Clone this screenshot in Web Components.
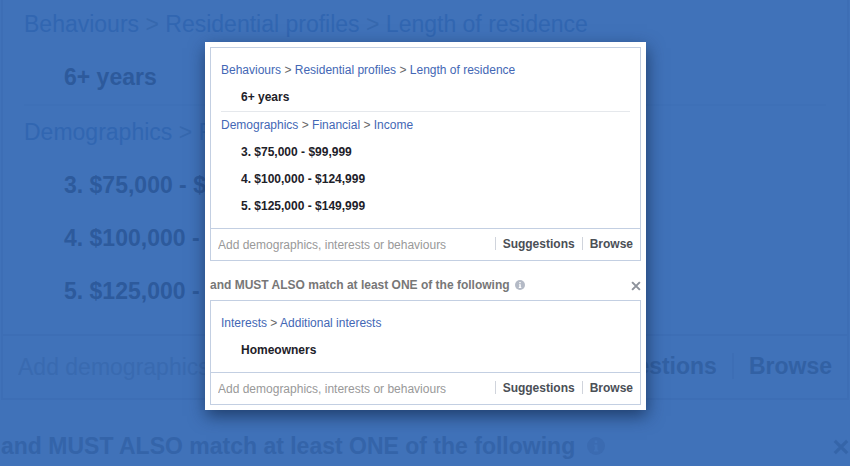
<!DOCTYPE html>
<html lang="en">
<head>
<meta charset="utf-8">
<title>Detailed targeting</title>
<style>
  html, body { margin: 0; }
  body { font-family: "Liberation Sans", Arial, sans-serif; }
</style>
</head>
<body>
<targeting-stage>
  <targeting-form slot="backdrop" class="backdrop" aria-hidden="true" inert></targeting-form>
  <targeting-form></targeting-form>
</targeting-stage>

<script>
/* Full-window stage: a faint enlarged form behind, a white card in front. */
class TargetingStage extends HTMLElement {
  constructor() {
    super();
    this.attachShadow({ mode: "open" }).innerHTML = `
      <style>
        :host {
          display: grid;
          grid-template-columns: 205fr 441fr 204fr;
          align-items: start;
          position: relative;
          box-sizing: border-box;
          min-height: 100vh;
          padding: 42px 0;
          overflow: hidden;
          background: #4072b9;
        }
        .back { position: absolute; inset: 0; overflow: hidden; }
        .card {
          grid-column: 2;
          position: relative;
          padding: 5px;
          background: #fff;
          box-shadow: 1px 6px 16px rgba(14, 34, 66, .65);
        }
        ::slotted(.backdrop) {
          --font: 23px;
          --row: 53px;
          --line: 2px;
          --top: 18px;
          --bottom: 16px;
          --inset: 21px;
          --indent: 40px;
          --foot: 62px;
          --foot-inset: 16px;
          --foot-gap: 16px;
          --bar: 26px;
          --head: 74px;
          --head-top: 18px;
          --info: 18px;
          --info-gap: 12px;
          --close: 16px;
          --border: #3d6eb5;
          --rule: #3e70b7;
          --link: #3166b1;
          --arrow: #3668ae;
          --item: #2d5a9c;
          --hint: #396ab0;
          --action: #3261a4;
          --title: #3464a9;
          --icon: #3b6bb1;
          --icon-mark: #4072b9;
          --cross: #3565a9;
          --second: none;
          margin: -22px 1px 0;
        }
      </style>
      <div class="back"><slot name="backdrop"></slot></div>
      <main class="card"><slot></slot></main>`;
  }
}

/* Both groups of conditions with the "must also match" heading between them. */
class TargetingForm extends HTMLElement {
  constructor() {
    super();
    this.attachShadow({ mode: "open" }).innerHTML = `
      <style>
        :host { display: block; font-size: var(--font, 12px); }
        .second { display: var(--second, block); }
      </style>
      <targeting-box>
        <targeting-group path="Behaviours|Residential profiles|Length of residence" items="6+ years"></targeting-group>
        <targeting-group path="Demographics|Financial|Income" items="3. $75,000 - $99,999|4. $100,000 - $124,999|5. $125,000 - $149,999"></targeting-group>
      </targeting-box>
      <match-heading>and MUST ALSO match at least ONE of the following</match-heading>
      <targeting-box class="second">
        <targeting-group path="Interests|Additional interests" items="Homeowners"></targeting-group>
      </targeting-box>`;
  }
}

/* A breadcrumb of categories followed by the values chosen in it. */
class TargetingGroup extends HTMLElement {
  connectedCallback() {
    if (this.shadowRoot) return;
    const path = this.getAttribute("path").split("|")
      .map(t => `<a href="#">${t}</a>`).join(" &gt; ");
    const items = this.getAttribute("items").split("|")
      .map(t => `<li>${t}</li>`).join("");
    this.attachShadow({ mode: "open" }).innerHTML = `
      <style>
        :host { display: block; white-space: nowrap; line-height: var(--row, 27px); }
        nav { color: var(--arrow, #666); }
        a { color: var(--link, #4367b5); text-decoration: none; }
        ul { list-style: none; margin: 0; padding: 0 0 0 var(--indent, 20px); }
        li { font-weight: bold; color: var(--item, #1d2129); }
      </style>
      <nav>${path}</nav>
      <ul>${items}</ul>`;
  }
}

/* Bordered box: groups on top, search field and its actions below. */
class TargetingBox extends HTMLElement {
  constructor() {
    super();
    this.attachShadow({ mode: "open" }).innerHTML = `
      <style>
        :host { display: block; border: var(--line, 1px) solid var(--border, #c3cfe2); }
        .groups { padding: var(--top, 9px) var(--inset, 10px) var(--bottom, 8px); }
        ::slotted(targeting-group:not(:last-child)) { border-bottom: var(--line, 1px) solid var(--rule, #e5e8ec); }
        .foot {
          display: flex;
          align-items: center;
          height: var(--foot, 31px);
          padding: 0 calc(var(--foot-gap, 8px) - 1px);
          border-top: var(--line, 1px) solid var(--border, #c3cfe2);
        }
        input {
          flex: 1;
          min-width: 0;
          padding: 0;
          border: 0;
          outline: 0;
          background: transparent;
          font: inherit;
          color: var(--item, #1d2129);
        }
        input::placeholder { color: var(--hint, #999); opacity: 1; }
        button {
          display: flex;
          align-items: center;
          padding: 0 0 2px;
          border: 0;
          background: transparent;
          font: inherit;
          font-weight: bold;
          color: var(--action, #4b4f56);
        }
        button::before {
          content: "";
          width: var(--line, 1px);
          height: var(--bar, 13px);
          margin-right: calc(var(--foot-gap, 8px) - 1px);
          background: var(--border, #d0d4dc);
        }
        button + button { margin-left: calc(var(--foot-gap, 8px) - 1px); }
      </style>
      <div class="groups"><slot></slot></div>
      <div class="foot">
        <input type="text" aria-label="Add demographics, interests or behaviours" placeholder="Add demographics, interests or behaviours">
        <button type="button">Suggestions</button>
        <button type="button">Browse</button>
      </div>`;
  }
}

/* Heading with an information badge and a button that removes the condition. */
class MatchHeading extends HTMLElement {
  constructor() {
    super();
    this.attachShadow({ mode: "open" }).innerHTML = `
      <style>
        :host {
          display: flex;
          align-items: center;
          box-sizing: border-box;
          height: var(--head, 39px);
          padding-top: var(--head-top, 9px);
          white-space: nowrap;
          font-weight: bold;
          color: var(--title, #777);
        }
        .info { width: var(--info, 10px); height: var(--info, 10px); margin-left: var(--info-gap, 5px); }
        button { display: flex; margin-left: auto; padding: 2px 0 0; border: 0; background: transparent; }
        .close { width: var(--close, 10px); height: var(--close, 10px); }
      </style>
      <span><slot></slot></span>
      <svg class="info" viewBox="0 0 10 10" role="img" aria-label="Information">
        <circle cx="5" cy="5" r="5" style="fill:var(--icon, #b4bac6)"/>
        <path d="M4.3 2h1.4v1.3H4.3zM4 4.2h1.8v2.9h.5V8H3.8v-.9h.5v-2H4z" style="fill:var(--icon-mark, #fff)"/>
      </svg>
      <button type="button" aria-label="Remove">
        <svg class="close" viewBox="0 0 9 9"><path d="M1 1l7 7M8 1L1 8" fill="none" stroke-width="1.8" style="stroke:var(--cross, #8d929b)"/></svg>
      </button>`;
  }
}

customElements.define("targeting-group", TargetingGroup);
customElements.define("targeting-box", TargetingBox);
customElements.define("match-heading", MatchHeading);
customElements.define("targeting-form", TargetingForm);
customElements.define("targeting-stage", TargetingStage);
</script>
</body>
</html>
